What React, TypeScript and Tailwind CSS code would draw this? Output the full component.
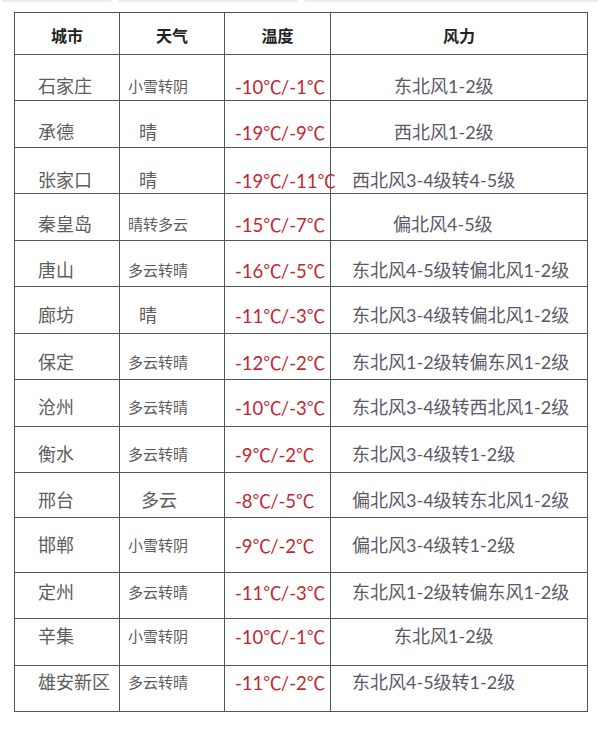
import React from "react";

type Row = {
  city: string;
  weather: string;
  wpl: string;
  wsize: string;
  temp: string;
  wind: string;
  windpl: string;
  h: string;
  pt: string;
  last?: boolean;
};

const rows: Row[] = [
  { city: "石家庄", weather: "小雪转阴", wpl: "pl-[8px]", wsize: "text-[15px]", temp: "-10℃/-1℃", wind: "东北风1-2级", windpl: "pl-[63px]", h: "h-[46px]", pt: "pt-[21px]" },
  { city: "承德", weather: "晴", wpl: "pl-[19px]", wsize: "text-[18px]", temp: "-19℃/-9℃", wind: "西北风1-2级", windpl: "pl-[63px]", h: "h-[47px]", pt: "pt-[21px]" },
  { city: "张家口", weather: "晴", wpl: "pl-[19px]", wsize: "text-[18px]", temp: "-19℃/-11℃", wind: "西北风3-4级转4-5级", windpl: "pl-[21px]", h: "h-[46px]", pt: "pt-[22px]" },
  { city: "秦皇岛", weather: "晴转多云", wpl: "pl-[8px]", wsize: "text-[15px]", temp: "-15℃/-7℃", wind: "偏北风4-5级", windpl: "pl-[62px]", h: "h-[47px]", pt: "pt-[20px]" },
  { city: "唐山", weather: "多云转晴", wpl: "pl-[8px]", wsize: "text-[15px]", temp: "-16℃/-5℃", wind: "东北风4-5级转偏北风1-2级", windpl: "pl-[21px]", h: "h-[46px]", pt: "pt-[19px]" },
  { city: "廊坊", weather: "晴", wpl: "pl-[19px]", wsize: "text-[18px]", temp: "-11℃/-3℃", wind: "东北风3-4级转偏北风1-2级", windpl: "pl-[21px]", h: "h-[47px]", pt: "pt-[18px]" },
  { city: "保定", weather: "多云转晴", wpl: "pl-[8px]", wsize: "text-[15px]", temp: "-12℃/-2℃", wind: "东北风1-2级转偏东风1-2级", windpl: "pl-[21px]", h: "h-[46px]", pt: "pt-[18px]" },
  { city: "沧州", weather: "多云转晴", wpl: "pl-[8px]", wsize: "text-[15px]", temp: "-10℃/-3℃", wind: "东北风3-4级转西北风1-2级", windpl: "pl-[21px]", h: "h-[47px]", pt: "pt-[17px]" },
  { city: "衡水", weather: "多云转晴", wpl: "pl-[8px]", wsize: "text-[15px]", temp: "-9℃/-2℃", wind: "东北风3-4级转1-2级", windpl: "pl-[21px]", h: "h-[46px]", pt: "pt-[17px]" },
  { city: "邢台", weather: "多云", wpl: "pl-[21px]", wsize: "text-[18px]", temp: "-8℃/-5℃", wind: "偏北风3-4级转东北风1-2级", windpl: "pl-[21px]", h: "h-[45px]", pt: "pt-[17px]" },
  { city: "邯郸", weather: "小雪转阴", wpl: "pl-[8px]", wsize: "text-[15px]", temp: "-9℃/-2℃", wind: "偏北风3-4级转1-2级", windpl: "pl-[21px]", h: "h-[55px]", pt: "pt-[17px]" },
  { city: "定州", weather: "多云转晴", wpl: "pl-[8px]", wsize: "text-[15px]", temp: "-11℃/-3℃", wind: "东北风1-2级转偏东风1-2级", windpl: "pl-[21px]", h: "h-[46px]", pt: "pt-[9px]" },
  { city: "辛集", weather: "小雪转阴", wpl: "pl-[8px]", wsize: "text-[15px]", temp: "-10℃/-1℃", wind: "东北风1-2级", windpl: "pl-[63px]", h: "h-[47px]", pt: "pt-[7px]" },
  { city: "雄安新区", weather: "多云转晴", wpl: "pl-[8px]", wsize: "text-[15px]", temp: "-11℃/-2℃", wind: "东北风4-5级转1-2级", windpl: "pl-[21px]", h: "h-[45px]", pt: "pt-[6px]", last: true },
];

const font = "font-['Lato','Noto_Sans_CJK_SC',sans-serif]";

function Temp({ text }: { text: string }) {
  const parts = text.split("℃");
  return (
    <>
      {parts.map((p, i) => (
        <React.Fragment key={i}>
          {p}
          {i < parts.length - 1 && (
            <span className="font-['Noto_Sans_CJK_SC',sans-serif] tracking-[-1px]">℃</span>
          )}
        </React.Fragment>
      ))}
    </>
  );
}

export default function App() {
  return (
    <div className="w-[600px] h-[732px] bg-white overflow-hidden">
      <div className="flex h-[2px] gap-[6px] px-[2px]">
        <div className="w-[110px] bg-[#ececec] rounded-b" />
        <div className="w-[180px] bg-[#ececec] rounded-b" />
        <div className="flex-1 bg-[#ececec] rounded-b" />
      </div>
      <div className="mt-[10px] ml-[14px] w-[574px] border border-[#555]">
        <div className="grid grid-cols-[105px_105px_106px_256px] h-[42px] border-b border-[#555] font-['Noto_Sans_CJK_SC',sans-serif] font-bold text-[16px] leading-[20px] text-[#222]">
          <div className="border-r border-[#555] pt-[12px] text-center">城市</div>
          <div className="border-r border-[#555] pt-[12px] text-center">天气</div>
          <div className="border-r border-[#555] pt-[12px] text-center">温度</div>
          <div className="pt-[12px] text-center">风力</div>
        </div>
        {rows.map((r) => (
          <div
            key={r.city}
            className={`grid grid-cols-[105px_105px_106px_256px] ${r.h} ${r.last ? "" : "border-b border-[#555]"} ${font} leading-[20px] whitespace-nowrap`}
          >
            <div className={`border-r border-[#555] ${r.pt} pl-[23px] text-[18px] text-[#5c5c5c]`}>{r.city}</div>
            <div className={`border-r border-[#555] ${r.pt} ${r.wpl} ${r.wsize} text-[#5c5c5c]`}>{r.weather}</div>
            <div className={`relative z-10 border-r border-[#555] ${r.pt} pl-[10px] text-[18.5px] text-[#c4262e] overflow-visible`}>
              <Temp text={r.temp} />
            </div>
            <div className={`${r.pt} ${r.windpl} text-[18px] text-[#5a5766]`}>{r.wind}</div>
          </div>
        ))}
      </div>
    </div>
  );
}
